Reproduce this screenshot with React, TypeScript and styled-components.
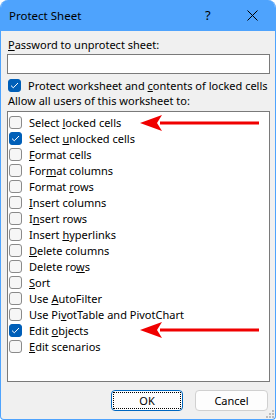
import React from "react";
import styled, { createGlobalStyle } from "styled-components";

const GlobalStyle = createGlobalStyle`
  html, body {
    margin: 0;
    padding: 0;
    background: #ffffff;
  }
  body {
    font-family: "Noto Sans", "Open Sans", sans-serif;
    font-size: 11px;
    color: #000;
  }
`;

interface Permission {
  before: string;
  key: string;
  after: string;
  checked?: boolean;
}

const permissions: Permission[] = [
  { before: "Select ", key: "l", after: "ocked cells" },
  { before: "Select ", key: "u", after: "nlocked cells", checked: true },
  { before: "", key: "F", after: "ormat cells" },
  { before: "For", key: "m", after: "at columns" },
  { before: "Format ", key: "r", after: "ows" },
  { before: "", key: "I", after: "nsert columns" },
  { before: "I", key: "n", after: "sert rows" },
  { before: "Insert ", key: "h", after: "yperlinks" },
  { before: "", key: "D", after: "elete columns" },
  { before: "Delete ro", key: "w", after: "s" },
  { before: "", key: "S", after: "ort" },
  { before: "Use ", key: "A", after: "utoFilter" },
  { before: "Use Pi", key: "v", after: "otTable and PivotChart" },
  { before: "Edit ", key: "o", after: "bjects", checked: true },
  { before: "", key: "E", after: "dit scenarios" },
];

function CheckBox({ checked }: { checked?: boolean }) {
  return (
    <Box $checked={checked}>
      {checked && (
        <svg width="9" height="7" viewBox="0 0 9 7">
          <path d="M1 3.6 L3.3 5.8 L8 1" fill="none" stroke="#fff" strokeWidth="1" />
        </svg>
      )}
    </Box>
  );
}

function Arrow({ top }: { top: number }) {
  return (
    <ArrowSvg style={{ top }} width="122" height="18" viewBox="0 0 122 18">
      <path d="M20 9 H119" stroke="#f00000" strokeWidth="3.2" />
      <path d="M0 9 L22 1 L17 9 L22 17 Z" fill="#f00000" />
    </ArrowSvg>
  );
}

export default function App() {
  return (
    <>
      <GlobalStyle />
      <Window>
        <TitleBar>
          <Title>Protect Sheet</Title>
          <Help>?</Help>
          <CloseIcon width="11" height="11" viewBox="0 0 11 11">
            <path d="M0.5 0.5 L10.5 10.5 M10.5 0.5 L0.5 10.5" stroke="#000" strokeWidth="1" />
          </CloseIcon>
        </TitleBar>
        <Body>
          <Label>
            <u>P</u>assword to unprotect sheet:
          </Label>
          <PasswordInput type="password" />
          <CheckRow>
            <CheckBox checked />
            <span>
              Protect worksheet and <u>c</u>ontents of locked cells
            </span>
          </CheckRow>
          <Label $tight>Allow all users of this worksheet to:</Label>
          <ListBox>
            {permissions.map((p) => (
              <ListRow key={p.before + p.key + p.after}>
                <CheckBox checked={p.checked} />
                <span>
                  {p.before}
                  <u>{p.key}</u>
                  {p.after}
                </span>
              </ListRow>
            ))}
            <Arrow top={2} />
            <Arrow top={209} />
          </ListBox>
          <ButtonRow>
            <DialogButton $primary>
              <FocusRing>OK</FocusRing>
            </DialogButton>
            <DialogButton>Cancel</DialogButton>
          </ButtonRow>
        </Body>
        <Grip width="8" height="8" viewBox="0 0 8 8">
          <rect x="6" y="0" width="2" height="2" fill="#bdbdbd" />
          <rect x="3" y="3" width="2" height="2" fill="#bdbdbd" />
          <rect x="6" y="3" width="2" height="2" fill="#bdbdbd" />
          <rect x="0" y="6" width="2" height="2" fill="#bdbdbd" />
          <rect x="3" y="6" width="2" height="2" fill="#bdbdbd" />
          <rect x="6" y="6" width="2" height="2" fill="#bdbdbd" />
        </Grip>
      </Window>
    </>
  );
}

const Window = styled.div`
  position: relative;
  box-sizing: border-box;
  width: 276px;
  height: 420px;
  display: flex;
  flex-direction: column;
  background: #f0f0f0;
  border: 1px solid #4ea3fd;
  border-top: none;
  border-radius: 8px 8px 4px 4px;
  overflow: hidden;
`;

const TitleBar = styled.div`
  height: 31px;
  flex: none;
  display: flex;
  align-items: center;
  background: #4ea3fd;
  margin: 0 -1px;
  padding: 0 0 0 9px;
`;

const Title = styled.span`
  flex: 1;
  font-size: 11.5px;
  padding-bottom: 1px;
`;

const Help = styled.span`
  font-size: 13px;
  width: 8px;
  margin-right: 34px;
  padding-bottom: 1px;
`;

const CloseIcon = styled.svg`
  margin-right: 18px;
  margin-bottom: 1px;
`;

const Body = styled.div`
  flex: 1;
  display: flex;
  flex-direction: column;
  padding: 6px 6px 0 6px;
`;

const Label = styled.div<{ $tight?: boolean }>`
  height: 16px;
  line-height: 16px;
  padding-left: 1px;
  margin-bottom: ${(p) => (p.$tight ? "2px" : "1px")};
`;

const PasswordInput = styled.input`
  box-sizing: border-box;
  width: 263px;
  height: 20px;
  border: 1px solid #7a7a7a;
  background: #fff;
  margin: 0;
  padding: 0 3px;
  outline: none;
`;

const CheckRow = styled.div`
  display: flex;
  align-items: center;
  gap: 7px;
  height: 16px;
  margin-top: 3px;
  padding-left: 1px;
  white-space: nowrap;
`;

const Box = styled.span<{ $checked?: boolean }>`
  box-sizing: border-box;
  flex: none;
  width: 13px;
  height: 13px;
  border-radius: 3px;
  display: flex;
  align-items: center;
  justify-content: center;
  border: 1px solid ${(p) => (p.$checked ? "#005fb8" : "#8a8a8a")};
  background: ${(p) => (p.$checked ? "#005fb8" : "#f6f6f6")};
`;

const ListBox = styled.div`
  position: relative;
  box-sizing: border-box;
  width: 263px;
  height: 271px;
  border: 1px solid #7a7a7a;
  background: #fff;
  padding: 2px 0 0 1px;
`;

const ListRow = styled.div`
  display: flex;
  align-items: center;
  gap: 7px;
  height: 16px;
  white-space: nowrap;
`;

const ArrowSvg = styled.svg`
  position: absolute;
  left: 132px;
`;

const ButtonRow = styled.div`
  display: flex;
  justify-content: flex-end;
  gap: 12px;
  margin-top: 8px;
  padding-right: 1px;
`;

const DialogButton = styled.button<{ $primary?: boolean }>`
  box-sizing: border-box;
  width: ${(p) => (p.$primary ? "72px" : "73px")};
  height: 21px;
  padding: 1px;
  margin: 0;
  display: flex;
  align-items: stretch;
  justify-content: center;
  font-family: inherit;
  font-size: 11px;
  color: #000;
  background: #fdfdfd;
  border: 1px solid ${(p) => (p.$primary ? "#0067c0" : "#d0d0d0")};
  border-radius: 4px;
  line-height: 17px;
`;

const FocusRing = styled.span`
  flex: 1;
  border: 1px dotted #000;
  line-height: 15px;
`;

const Grip = styled.svg`
  position: absolute;
  right: 1px;
  bottom: 1px;
`;
